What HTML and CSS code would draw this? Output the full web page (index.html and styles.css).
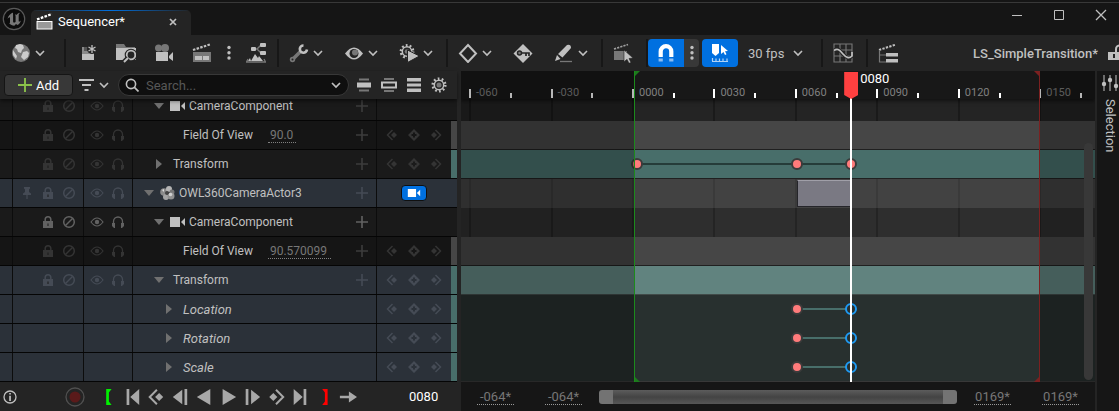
FILE: index.html
```html
<!DOCTYPE html>
<html lang="en">
<head>
    <meta charset="UTF-8">
    <meta name="viewport" content="width=device-width, initial-scale=1.0">
    <title>Sequencer</title>
    <link rel="stylesheet" href="styles.css">
</head>
<body>
    <svg class="sprite" aria-hidden="true">
        <symbol id="i-chev" viewBox="0 0 10 20"><path d="M1 8l4 4 4-4" fill="none" stroke="currentColor" stroke-width="1.6"/></symbol>
        <symbol id="i-dots" viewBox="0 0 6 20"><circle cx="3" cy="4.500" r="1.700"/><circle cx="3" cy="9.700" r="1.700"/><circle cx="3" cy="15" r="1.700"/></symbol>
        <symbol id="i-lock" viewBox="0 0 14 14"><path d="M2 6h10v7H2z"/><path d="M4.200 6.500V4.500a2.800 2.800 0 0 1 5.600 0v2" fill="none" stroke="currentColor" stroke-width="1.500"/><path d="M6.500 8.500h1v2.500h-1z" fill="#1a1a1a"/></symbol>
        <symbol id="i-ban" viewBox="0 0 14 14"><g fill="none" stroke="currentColor" stroke-width="1.500"><circle cx="7" cy="7" r="5.300"/><path d="M3.500 10.500l7-7"/></g></symbol>
        <symbol id="i-eye" viewBox="0 0 14 14"><path d="M1 7q6-8 12 0q-6 8-12 0z" fill="none" stroke="currentColor" stroke-width="1.200"/><circle cx="7" cy="7" r="2.200"/></symbol>
        <symbol id="i-phones" viewBox="0 0 14 14"><path d="M2.500 9V6.500a4.500 4.500 0 0 1 9 0V9" fill="none" stroke="currentColor" stroke-width="1.300"/><path d="M1 8h3v5H3L1 11zM13 8h-3v5h1l2-2z"/></symbol>
        <symbol id="i-pin" viewBox="0 0 14 14"><path d="M4 1h6v1.500L9 3.500V6l2 1.500V9H7.600v4H6.400V9H3V7.500L5 6V3.500L4 2.500z"/></symbol>
        <symbol id="i-plus" viewBox="0 0 12 12"><path d="M5.200 0h1.600v5.200H12v1.600H6.800V12H5.200V6.800H0V5.200h5.200z"/></symbol>
        <symbol id="i-cam" viewBox="0 0 17 12"><path d="M1 1h10v10H1zM12 6l4-4v8z"/></symbol>
        <symbol id="i-actor" viewBox="0 0 17 16"><circle cx="5" cy="7" r="3.800" fill="#8b8b8b"/><circle cx="10" cy="4" r="3" fill="#b5b5b5"/><circle cx="13" cy="7" r="2.500" fill="#777"/><circle cx="7" cy="12" r="3" fill="#a5a5a5"/><circle cx="12" cy="11" r="3.500" fill="#919191"/><circle cx="8" cy="8" r="2" fill="#444"/><circle cx="11.500" cy="9.500" r="1.800" fill="#d0d0d0"/><path d="M3 5l2-1v3z" fill="#ddd"/></symbol>
        <symbol id="i-open" viewBox="0 0 10 10"><path d="M0 2h10L5 8z"/></symbol>
        <symbol id="i-shut" viewBox="0 0 10 10"><path d="M2 0v10l6-5z"/></symbol>
        <symbol id="i-prev" viewBox="0 0 12 12"><path d="M6.500 1L1.500 6l5 5" fill="none" stroke="currentColor" stroke-width="1.500"/><path d="M8 3l3 3-3 3-3-3z"/></symbol>
        <symbol id="i-next" viewBox="0 0 12 12"><path d="M5.500 1l5 5-5 5" fill="none" stroke="currentColor" stroke-width="1.500"/><path d="M4 3l3 3-3 3-3-3z"/></symbol>
        <symbol id="i-key" viewBox="0 0 12 12"><path fill-rule="evenodd" d="M6 0l6 6-6 6-6-6zM5 3.500V5H3.500v2H5v1.500h2V7h1.500V5H7V3.500z"/></symbol>
    </svg>

    <header class="titlebar">
        <svg class="logo" viewBox="0 0 24 24"><circle cx="12" cy="12" r="10.700" fill="#0c0c0c" stroke="#5a5a5a" stroke-width="1.200"/><path d="M11 5.500C8.500 6.500 6 9 5.500 12c.8-1.200 1.700-2 2.200-1.700.5.200.3.900.3 1.700v3.200c0 .7-.3 1-.9.900 1.400 1.800 3.300 2.600 5.200 2.600l1.700-1.700 1.600 1.100c1.600-1 2.800-2.500 3.200-4.500-.8.900-1.500 1.200-1.900 1-.3-.2-.2-.6-.2-1.200V8.500c0-1.200.6-2 1.500-2.700-1.700.3-3 1-3.800 2.200-.5-.5-1-.6-1.700-.6.700.5.900.9.900 1.800v5.500c-.5.600-1 .9-1.500.9-.7 0-1-.5-1-1.300V8.500c0-1.300-.1-2.200-.1-3z" fill="#777"/></svg>
        <div class="tab">
            <svg class="tab-icon" viewBox="0 0 16 16"><path d="M1 8h14v7H1z" fill="#999" stroke="#fff"/><path d="M1 6l14-5" stroke="#fff" stroke-width="2.200" stroke-dasharray="2.500 1.200"/></svg>
            <span class="tab-name">Sequencer*</span>
            <button class="tab-close" aria-label="Close tab"><svg width="8" height="8" viewBox="0 0 8 8"><path d="M1 1l6 6M7 1L1 7" stroke="#c0c0c0" stroke-width="1.700"/></svg></button>
        </div>
        <div class="window-buttons">
            <button aria-label="Minimize"><svg viewBox="0 0 12 12"><path d="M1 6.500h10" stroke="#c0c0c0"/></svg></button>
            <button aria-label="Maximize"><svg viewBox="0 0 12 12"><path d="M1.500 1.500h9v9h-9z" fill="none" stroke="#c0c0c0"/></svg></button>
            <button aria-label="Close"><svg viewBox="0 0 12 12"><path d="M1 1l10 10M11 1L1 11" stroke="#c0c0c0" stroke-width="1.300"/></svg></button>
        </div>
    </header>

    <nav class="toolbar">
        <div class="group group-world">
            <button class="combo" aria-label="World"><svg class="ico" viewBox="0 0 20 20"><circle cx="10" cy="10" r="9" fill="#777"/><path d="M5 2l4-1 3 1 1 3-2 2-1 3-3-1-1-3-2-1zM12 9l4-1 2 2-1 4-4 3-3-3zM2 7l2 3 2 3-1 3-3-4z" fill="#ccc"/></svg><svg class="chev"><use href="#i-chev"/></svg></button>
        </div>
        <div class="group tight">
            <button aria-label="Save"><svg class="ico" viewBox="0 0 20 20"><path d="M4 4h12v13H4z" fill="#8a8a8a"/><path d="M6 4h5v4H6z" fill="#555"/><path d="M4 11h12v6H4z" fill="#c0c0c0"/><circle cx="14" cy="6" r="5" fill="#242424"/><path d="M14 2v8M10.500 4l7 4M10.500 8l7-4" stroke="#c0c0c0" stroke-width="1.300"/></svg></button>
            <button aria-label="Browse"><svg class="ico" viewBox="0 0 20 20"><path d="M0 1h8l2 3h9v3H0z" fill="#777"/><path d="M0 5h20v12H0z" fill="#c0c0c0"/><circle cx="15" cy="12" r="6.300" fill="#242424"/><circle cx="15" cy="12" r="4.300" fill="none" stroke="#c0c0c0" stroke-width="1.800"/><path d="M12 15l-4.500 4.500" stroke="#242424" stroke-width="5"/><path d="M12 15l-4 4" stroke="#c0c0c0" stroke-width="1.900"/></svg></button>
            <button aria-label="Create camera"><svg class="ico" viewBox="0 0 20 20"><circle cx="4.500" cy="5" r="3.500" fill="#777"/><circle cx="11" cy="5" r="4" fill="#777"/><path d="M2 9h12v9H2zM15 13l4-4v9l-4-3z" fill="#c0c0c0"/></svg></button>
            <button aria-label="Render movie"><svg class="ico" viewBox="0 0 20 20"><path d="M1 7L18 1.500" stroke="#c0c0c0" stroke-width="2.200" stroke-dasharray="2.500 1.300"/><path d="M1 9h18v10H1z" fill="#777"/><path d="M3 13h7v4H3zM11 13h6v4h-6z" fill="#c0c0c0"/></svg></button>
            <button class="dots" aria-label="Render options"><svg><use href="#i-dots"/></svg></button>
            <button aria-label="Actor sequence"><svg class="ico" viewBox="0 0 20 20"><path d="M2 18l2-3 1 3zM5 18l4-7 3 4 1-2 4 5z" fill="#c0c0c0"/><path d="M2 16l-1.500 3h19L18 16" fill="none" stroke="#777" stroke-width="1.300"/><path d="M8 6h3l4-4M11 6l4 4" stroke="#777" stroke-width="1.400" fill="none"/><rect x="5" y="4" width="5" height="4" rx="1" fill="#c0c0c0"/><rect x="14" width="6" height="4" rx="1" fill="#c0c0c0"/><rect x="14" y="8" width="6" height="4" rx="1" fill="#c0c0c0"/></svg></button>
        </div>
        <div class="group">
            <button class="combo" aria-label="Actions"><svg class="ico" viewBox="0 0 20 20"><path d="M3.500 16.500L12 8" stroke="#777" stroke-width="3.500"/><circle cx="3.500" cy="16.500" r="2.700" fill="#777"/><circle cx="3.500" cy="16.500" r="1" fill="#242424"/><path d="M14.500 2.500a3.600 3.600 0 1 0 3.500 4" fill="none" stroke="#c0c0c0" stroke-width="2.600"/></svg><svg class="chev"><use href="#i-chev"/></svg></button>
            <button class="combo" aria-label="View"><svg class="ico" viewBox="0 0 20 20"><path d="M1 10.500q9-12 18 0q-9 12-18 0z" fill="#c0c0c0"/><circle cx="10" cy="10.500" r="4.500" fill="#242424"/><circle cx="11" cy="9.500" r="3" fill="#777"/></svg><svg class="chev"><use href="#i-chev"/></svg></button>
            <button class="combo" aria-label="Playback"><svg class="ico" viewBox="0 0 20 20"><circle cx="8" cy="8.500" r="6.200" fill="none" stroke="#c0c0c0" stroke-width="2.400" stroke-dasharray="1.800 2.090"/><circle cx="8" cy="8.500" r="4.700" fill="none" stroke="#c0c0c0" stroke-width="1.500"/><circle cx="8" cy="8.500" r="2.300" fill="#777"/><path d="M8.500 7l12 6-12 6.500z" fill="#c0c0c0" stroke="#242424"/></svg><svg class="chev"><use href="#i-chev"/></svg></button>
        </div>
        <div class="group">
            <button class="combo" aria-label="Keying"><svg class="ico" viewBox="0 0 20 20"><path d="M10 2l8 8.500-8 8.500-8-8.500z" fill="none" stroke="#c0c0c0" stroke-width="2"/></svg><svg class="chev"><use href="#i-chev"/></svg></button>
            <button aria-label="Auto key"><svg class="ico" viewBox="0 0 20 20"><path d="M10 1l9.500 9.500L10 20 .5 10.500z" fill="#c0c0c0"/><circle cx="6.500" cy="10" r="2" fill="#777" stroke="#242424" stroke-width="1.500"/><path d="M9 10h7v3M13 10v3" fill="none" stroke="#242424" stroke-width="1.700"/></svg></button>
            <button class="combo" aria-label="Edit options"><svg class="ico" viewBox="0 0 20 20"><path d="M1 18l2-6 3.500 4zM4 11l9-9q4-1 4 3l-8.500 9.500z" fill="#c0c0c0"/><path d="M6 18.500h12" stroke="#777" stroke-width="1.300"/></svg><svg class="chev"><use href="#i-chev"/></svg></button>
        </div>
        <div class="group">
            <button aria-label="Select section"><svg class="ico" viewBox="0 0 20 20"><path d="M1 6l14-4.500" stroke="#a0a0a0" stroke-width="1.700" stroke-dasharray="2.200 1.100"/><path d="M1 8h13v9H1z" fill="#777"/><path d="M11 7l9 8-4 .5 2 4-2 .8-2-4-3 2.500z" fill="#c0c0c0" stroke="#242424" stroke-width=".6"/></svg></button>
        </div>
        <div class="group group-snap">
            <button class="toggle toggle-left" aria-label="Snapping" aria-pressed="true"><svg class="ico" viewBox="0 0 20 20"><path d="M4.700 14V8.500a5.300 5.300 0 0 1 10.600 0V14" fill="none" stroke="#fff" stroke-width="4.200"/><path d="M2.600 15.500h4.200v3H2.600zM13.200 15.500h4.200v3h-4.200z" fill="#8cbcf0"/></svg></button>
            <button class="toggle-more" aria-label="Snap options"><svg><use href="#i-dots"/></svg></button>
            <button class="toggle" aria-label="Play marker snap" aria-pressed="true"><svg class="ico" viewBox="0 0 20 20"><path d="M2 1h7v9l-3.500 3L2 10z" fill="#fff"/><path d="M11 2l7 6-3 .3 1.500 3-1.500.7-1.500-3L11 11z" fill="#fff"/><path d="M2 18.500h16M2.500 18v-3M6 18v-2.500M9.500 18v-2.500M13 18v-2.500M17 18v-2.500" stroke="#b0d2f6" stroke-width="1.200"/></svg></button>
            <label class="fps"><select aria-label="Frame rate"><option>30 fps</option></select><svg class="chev"><use href="#i-chev"/></svg></label>
        </div>
        <div class="group">
            <button aria-label="Curve editor"><svg class="ico" viewBox="0 0 20 20"><path d="M1 1h18v18H1zM7 1v18M13 1v18M1 7h18M1 13h18" fill="none" stroke="#777" stroke-width="1.100"/><path d="M1 7.500c4-3 6 0 9 3.500s6 5 9 2" fill="none" stroke="#242424" stroke-width="3.500"/><path d="M1 7.500c4-3 6 0 9 3.500s6 5 9 2V9" fill="none" stroke="#c0c0c0" stroke-width="1.700"/></svg></button>
        </div>
        <div class="group group-last">
            <button aria-label="Sequence list"><svg class="ico" viewBox="0 0 20 20"><path d="M1 7L18 1.500" stroke="#c0c0c0" stroke-width="2" stroke-dasharray="2.300 1.300"/><path d="M1.500 7v12H8M1.500 12H8" fill="none" stroke="#777" stroke-width="1.200"/><path d="M8 10h12v3.500H8zM8 16h12v3.500H8z" fill="#c0c0c0"/></svg></button>
        </div>
        <a class="crumb" href="#">LS_SimpleTransition*</a>
        <button class="crumb-lock" aria-label="Lock sequence"><svg class="ico" viewBox="0 0 20 20"><path d="M1 9h15v8H1z" fill="#c0c0c0"/><path d="M9 9V6a3.500 3.500 0 0 1 7 0" fill="none" stroke="#c0c0c0" stroke-width="2"/><path d="M6 11h2v4H6z" fill="#242424"/></svg></button>
    </nav>

    <main class="panes">
        <section class="outliner">
            <div class="filters">
                <button class="add"><svg width="14" height="14" viewBox="0 0 12 12"><use href="#i-plus"/></svg>Add</button>
                <button class="filter-menu" aria-label="Filter"><svg width="15" height="14" viewBox="0 0 15 14"><path d="M0 2h15M3 7h9M5.500 12h4" stroke="#c0c0c0" stroke-width="1.800"/></svg><svg class="chev"><use href="#i-chev"/></svg></button>
                <label class="search">
                    <svg width="14" height="14" viewBox="0 0 14 14"><circle cx="6" cy="6" r="4.600" fill="none" stroke="#c0c0c0" stroke-width="1.600"/><path d="M9.200 9.200l4.300 4.300" stroke="#c0c0c0" stroke-width="1.700"/></svg>
                    <input type="text" placeholder="Search..." aria-label="Search tracks">
                    <svg width="12" height="20" viewBox="0 0 10 20"><path d="M1 8l4 4 4-4" fill="none" stroke="#c0c0c0" stroke-width="1.700"/></svg>
                </label>
                <div class="views">
                    <button aria-label="Collapse"><svg viewBox="0 0 16 16"><path d="M3 1.500h10v2H3zM3 12.500h10v2H3z" fill="#777"/><path d="M1 5.500h14v5H1z" fill="#c0c0c0"/></svg></button>
                    <button aria-label="Compact"><svg viewBox="0 0 16 16"><path d="M3 1h10v2H3zM3 13h10v2H3z" fill="#777"/><path d="M1 5.500h14v5H1z" fill="none" stroke="#c0c0c0" stroke-width="2"/></svg></button>
                    <button aria-label="Expand"><svg viewBox="0 0 16 16"><path d="M1 1h14v3.500H1zM1 6.500h14v3H1zM1 11.500h14V15H1z" fill="#c0c0c0"/></svg></button>
                    <button aria-label="Settings"><svg viewBox="0 0 16 16"><circle cx="8" cy="8" r="6.300" fill="none" stroke="#c0c0c0" stroke-width="2.500" stroke-dasharray="1.700 2.250"/><circle cx="8" cy="8" r="4.700" fill="none" stroke="#c0c0c0" stroke-width="1.500"/><circle cx="8" cy="8" r="2.500" fill="#777"/></svg></button>
                </div>
            </div>
            <div class="viewport">
                <div class="tracks" id="tracks"></div>
            </div>
            <div class="transport">
                <button class="info" aria-label="Info"><svg width="14" height="14" viewBox="0 0 14 14"><circle cx="7" cy="7" r="6" fill="none" stroke="#c0c0c0" stroke-width="1.300"/><path d="M6.200 3h1.700v1.600H6.200zM6.200 5.700h1.700V11H6.200z" fill="#c0c0c0"/></svg></button>
                <button class="record" aria-label="Record"><svg width="20" height="20" viewBox="0 0 20 20"><circle cx="10" cy="10" r="9" fill="none" stroke="#505050" stroke-width="1.300"/><circle cx="10" cy="10" r="5.500" fill="#5a1a1a"/></svg></button>
                <button aria-label="Set start"><svg viewBox="0 0 20 20"><path d="M8 1h6l-3 4v10l3 4H8z" fill="#00f000"/></svg></button>
                <button aria-label="To start"><svg viewBox="0 0 20 20"><path d="M4 1h3v18H4zM18 1v18L8 10z"/></svg></button>
                <button aria-label="Previous key"><svg viewBox="0 0 20 20"><path d="M11 2l-8 8 8 8" fill="none" stroke="currentColor" stroke-width="2.200"/><path d="M13.500 5.500L18 10l-4.500 4.500L9 10z"/></svg></button>
                <button aria-label="Step back"><svg viewBox="0 0 20 20"><path d="M15 1h3v18h-3zM12.500 2v16L2 10z"/></svg></button>
                <button aria-label="Play reverse"><svg viewBox="0 0 20 20"><path d="M17 1v18L2 10z"/></svg></button>
                <button aria-label="Play"><svg viewBox="0 0 20 20"><path d="M4 1v18l15-9z"/></svg></button>
                <button aria-label="Step forward"><svg viewBox="0 0 20 20"><path d="M3 1h3v18H3zM9 2v16l10-8z"/></svg></button>
                <button aria-label="Next key"><svg viewBox="0 0 20 20"><path d="M10 2l8 8-8 8" fill="none" stroke="currentColor" stroke-width="2.200"/><path d="M7 5.500l4.500 4.500L7 14.500 2.500 10z"/></svg></button>
                <button aria-label="To end"><svg viewBox="0 0 20 20"><path d="M14 1h3v18h-3zM3 1v18l10-9z"/></svg></button>
                <button aria-label="Set end"><svg viewBox="0 0 20 20"><path d="M14 1H8l3 4v10l-3 4h6z" fill="#f00"/></svg></button>
                <button aria-label="Loop mode"><svg viewBox="0 0 20 20"><path d="M1 8.500h10V4l9 6-9 6v-4.500H1z"/></svg></button>
                <input class="now" type="text" value="0080" aria-label="Current frame">
            </div>
        </section>

        <section class="timeline">
            <div class="ruler" id="ruler"></div>
            <div class="viewport">
                <div class="lanes" id="lanes"></div>
            </div>
            <div class="shade shade-left"></div>
            <div class="shade shade-right"></div>
            <div class="bound bound-start"></div>
            <div class="bound bound-end"></div>
            <div class="playhead"><span class="playhead-frame">0080</span></div>
            <div class="vscroll"></div>
            <div class="range">
                <input type="text" value="-064*" aria-label="Working range start">
                <input type="text" value="-064*" aria-label="View range start">
                <div class="hscroll"></div>
                <input type="text" value="0169*" aria-label="View range end">
                <input type="text" value="0169*" aria-label="Working range end">
            </div>
        </section>

        <aside class="drawer">
            <button><svg width="18" height="18" viewBox="0 0 18 18"><path d="M3 1v16M9 1v16M15 1v16" stroke="#777" stroke-width="1.800"/><circle cx="3" cy="10" r="2.200"/><circle cx="9" cy="6" r="2.200"/><circle cx="15" cy="12" r="2.200"/></svg><span>Selection</span></button>
        </aside>
    </main>

    <script>
        const rows = [
            { name: "CameraComponent", indent: 21, arrow: "open", icon: "cam", tools: true, add: true },
            { name: "Field Of View", indent: 50, value: "90.0", tools: true, add: true, nav: true, look: "deep", bar: "gray", lane: "gray" },
            { name: "Transform", indent: 21, arrow: "shut", tools: true, add: true, nav: true, bar: "teal", lane: "teal", keys: [1, 60, 80] },
            { name: "OWL360CameraActor3", indent: 11, arrow: "open", icon: "actor", tools: true, pin: true, add: true, cut: true, look: "selected", lane: "actor", section: [60, 80] },
            { name: "CameraComponent", indent: 21, arrow: "open", icon: "cam", tools: true, add: true, look: "hover", lane: "hover" },
            { name: "Field Of View", indent: 50, value: "90.570099", tools: true, add: true, nav: true, look: "deep", bar: "gray", lane: "gray" },
            { name: "Transform", indent: 21, arrow: "open", tools: true, add: true, nav: true, look: "selected", bar: "teal", lane: "bright" },
            { name: "Location", indent: 31, arrow: "shut", nav: true, look: "selected channel", bar: "teal", lane: "channel", keys: [60], picked: 80 },
            { name: "Rotation", indent: 31, arrow: "shut", nav: true, look: "selected channel", bar: "teal", lane: "channel", keys: [60], picked: 80 },
            { name: "Scale", indent: 31, arrow: "shut", nav: true, look: "selected channel", bar: "teal", lane: "channel last", keys: [60], picked: 80 }
        ];

        const button = (id, label, cls = "") =>
            `<button class="${cls}" aria-label="${label}"><svg><use href="#i-${id}"/></svg></button>`;

        function trackRow(r) {
            const arrow = r.arrow ? button(r.arrow, "Toggle " + r.name, "arrow") : "";
            const icon = r.icon ? `<svg class="type"><use href="#i-${r.icon}"/></svg>` : "";
            const value = r.value ? `<input class="value ${r.value.length > 5 ? "wide" : ""}" type="text" value="${r.value}" aria-label="${r.name}">` : "";
            return `<div class="row ${r.look || ""}">
                <div class="cell"></div>
                <div class="cell tools">${r.pin ? button("pin", "Pin") : ""}${r.tools ? button("lock", "Lock") + button("ban", "Mute") : ""}</div>
                <div class="cell tools">${r.tools ? button("eye", "Visible") + button("phones", "Solo") : ""}</div>
                <div class="cell name" style="padding-left:${r.indent}px">${arrow}${icon}<span class="${icon ? "" : "plain"}">${r.name}</span>${value}${r.add ? button("plus", "Add track", "plus") : ""}</div>
                <div class="nav">${r.nav ? button("prev", "Previous key") + button("key", "Add key") + button("next", "Next key") : ""}${r.cut ? button("cam", "Camera lock", "cut") : ""}</div>
                <div class="bar ${r.bar || ""}"></div>
            </div>`;
        }

        function laneRow(r) {
            const keys = (r.keys || []).slice();
            const all = r.picked ? keys.concat(r.picked) : keys;
            let html = "";
            if (all.length) {
                html += `<i class="link" style="--f:${all[0]};--len:${all[all.length - 1] - all[0]}"></i>`;
            }
            if (r.section) {
                html += `<i class="clip" style="--f:${r.section[0]};--len:${r.section[1] - r.section[0]}"></i>`;
            }
            html += keys.map(k => `<i class="key" style="--f:${k}"></i>`).join("");
            if (r.picked) html += `<i class="key picked" style="--f:${r.picked}"></i>`;
            return `<div class="lane ${r.lane || ""}">${html}</div>`;
        }

        let ticks = "";
        let grid = "";
        for (let f = -60; f <= 165; f += 15) {
            const major = f % 30 === 0;
            const label = (f < 0 ? "-" : "") + String(Math.abs(f)).padStart(f < 0 ? 3 : 4, "0");
            ticks += `<i class="tick ${major ? "major" : ""}" style="--f:${f}"></i>`;
            if (major) {
                ticks += `<span class="tick-label" style="--f:${f}">${label}</span>`;
                grid += `<i class="gridline" style="--f:${f}"></i>`;
            }
        }

        document.getElementById("tracks").innerHTML = rows.map(trackRow).join("");
        document.getElementById("lanes").innerHTML = grid + rows.map(laneRow).join("");
        document.getElementById("ruler").innerHTML = ticks;
    </script>
</body>
</html>
```
FILE: styles.css
```css
* {
    box-sizing: border-box;
}

body {
    margin: 0;
    height: 100vh;
    display: flex;
    flex-direction: column;
    overflow: hidden;
    background: #151515;
    color: #c0c0c0;
    font-family: Roboto, "Liberation Sans", sans-serif;
    font-size: 13px;
}

button,
input,
select {
    margin: 0;
    padding: 0;
    border: 0;
    background: none;
    color: inherit;
    font: inherit;
}

button {
    display: flex;
    align-items: center;
    justify-content: center;
    flex: none;
}

svg {
    display: block;
    flex: none;
    fill: currentColor;
}

.sprite {
    position: absolute;
    width: 0;
    height: 0;
}

/* title bar */
.titlebar {
    display: flex;
    flex: none;
    height: 35px;
    padding-left: 2px;
    border-top: 1px solid #151515;
    background: linear-gradient(#151515 1px, #383838 1px, #383838 2px, #151515 2px);
}

.logo {
    width: 24px;
    height: 24px;
    margin-top: 6px;
}

.tab {
    display: flex;
    align-items: center;
    width: 160px;
    margin: 9px 0 0 5px;
    padding: 0 14px 2px 5px;
    border-radius: 5px 5px 0 0;
    background: linear-gradient(90deg, #242424, #0070e0, #242424) top / 100% 1px no-repeat #242424;
    color: #fff;
}

.tab-icon {
    width: 17px;
    height: 17px;
}

.tab-name {
    margin: 0 auto 0 5px;
}

.window-buttons {
    display: flex;
    align-items: flex-start;
    gap: 30px;
    margin: 8px 12px 0 auto;
}

.window-buttons svg {
    width: 12px;
    height: 12px;
}

/* toolbar */
.toolbar {
    display: flex;
    flex: none;
    align-items: center;
    height: 36px;
    background: #242424;
}

.group {
    display: flex;
    align-items: center;
    gap: 21px;
    height: 28px;
    padding: 0 13px 0 10px;
    border-right: 2px solid #171717;
}

.group-world {
    padding: 0 19px 0 11px;
}

.tight {
    gap: 18px;
    padding: 0 11px 0 12px;
}

.combo {
    gap: 4px;
}

.ico {
    width: 20px;
    height: 20px;
}

.chev {
    width: 10px;
    height: 20px;
}

.dots {
    margin: 0 -4px;
}

.dots svg,
.toggle-more svg {
    width: 6px;
    height: 20px;
}

.group-snap {
    gap: 0;
    padding: 0 18px 0 0;
}

.group-last {
    border-right: 0;
}

.toggle {
    width: 36px;
    height: 28px;
    border-radius: 4px;
    background: #0070e0;
}

.toggle-left {
    border-radius: 4px 0 0 4px;
}

.toggle-more {
    width: 15px;
    height: 28px;
    margin-right: 3px;
    border-radius: 0 4px 4px 0;
    background: #383838;
}

.fps {
    display: flex;
    align-items: center;
    gap: 8px;
    margin-left: 10px;
}

.fps select {
    appearance: none;
}

.crumb {
    margin-left: auto;
    color: #c0c0c0;
    font-weight: 500;
    text-decoration: none;
}

.crumb-lock {
    margin: 0 -8px 0 9px;
}

/* panes */
.panes {
    display: grid;
    flex: 1;
    grid-template-columns: minmax(461px, 41%) 1fr 24px;
    min-height: 0;
}

.outliner {
    display: flex;
    flex-direction: column;
    min-height: 0;
    padding-right: 4px;
    background: #242424;
}

.viewport {
    flex: 1;
    min-height: 0;
    overflow: hidden;
}

.filters {
    display: flex;
    flex: none;
    align-items: center;
    height: 28px;
    padding: 0 10px 0 4px;
    background: #242424;
    box-shadow: 0 2px 4px #0008;
    z-index: 1;
}

.add {
    gap: 4px;
    width: 69px;
    height: 22px;
    border: 1px solid #151515;
    border-radius: 4px;
    background: #383838;
    color: #fff;
}

.add svg {
    color: #8bc24a;
}

.filter-menu {
    gap: 5px;
    margin: 0 9px 0 6px;
}

.search {
    display: flex;
    flex: 1;
    align-items: center;
    gap: 7px;
    height: 22px;
    padding: 0 6px;
    border: 1px solid #383838;
    border-radius: 11px;
    background: #0f0f0f;
}

.search input {
    flex: 1;
    min-width: 0;
}

.search input::placeholder {
    color: #575757;
}

.views {
    display: flex;
    gap: 9px;
    margin-left: 7px;
}

.views svg {
    width: 16px;
    height: 16px;
}

/* track list, scrolled a little past the first row */
.tracks,
.lanes {
    position: relative;
    margin-top: -7px;
}

.row {
    display: grid;
    grid-template-columns: 13px 71px 49px 1fr 74px 6px;
    height: 29px;
    border-bottom: 1px solid #050505;
    background: #1a1a1a;
    font-size: 12px;
}

.deep {
    background: #151515;
}

.selected {
    background: #2b3139;
}

.cell {
    display: flex;
    align-items: center;
    border-right: 1px solid #0c0c0c;
}

.tools {
    justify-content: flex-end;
    gap: 7px;
    padding-right: 7px;
    color: #343434;
}

.tools svg {
    width: 14px;
    height: 14px;
}

.selected .tools,
.selected .nav,
.selected .plus {
    color: #454b55;
}

.hover .tools,
.hover .plus {
    color: #626262;
}

.arrow {
    color: #707070;
}

.arrow svg {
    width: 10px;
    height: 10px;
}

.type {
    width: 17px;
    height: 16px;
    margin: 0 3px 0 5px;
}

.arrow + .plain {
    margin-left: 9px;
}

.channel {
    font-size: 13px;
}

.channel span {
    font-style: italic;
}

.value {
    width: 28px;
    margin-left: 15px;
    padding-left: 2px;
    border-bottom: 1px dotted #808080;
    color: #777;
}

.wide {
    width: 63px;
}

.plus {
    margin: 0 8px 0 auto;
    color: #3c3c3c;
}

.plus svg {
    width: 12px;
    height: 12px;
}

.nav {
    display: flex;
    align-items: center;
    justify-content: center;
    gap: 10px;
    color: #343434;
}

.nav svg {
    width: 12px;
    height: 12px;
}

.cut {
    width: 26px;
    height: 16px;
    border: 1px solid #101010;
    border-radius: 4px;
    background: #0070e0;
    color: #fff;
}

.cut svg {
    width: 14px;
    height: 10px;
}

.gray {
    background: #464646;
}

.teal {
    background: #486e6a;
}

/* transport */
.transport {
    display: flex;
    flex: none;
    align-items: center;
    height: 29px;
    color: #a8a8a8;
}

.transport button {
    width: 24px;
}

.transport button svg {
    width: 18px;
    height: 18px;
}

.transport .info {
    width: 20px;
}

.transport .info svg {
    width: 14px;
    height: 14px;
}

.transport .record {
    margin: 0 9px 0 43px;
}

.transport .record svg {
    width: 20px;
    height: 20px;
}

.now {
    width: 32px;
    margin: 0 16px 0 auto;
    color: #fff;
}

/* timeline: --f is a frame, the view spans 233 frames from -64 */
.timeline {
    position: relative;
    display: flex;
    flex-direction: column;
    min-height: 0;
    overflow: hidden;
    background: #242424;
}

.ruler {
    position: relative;
    flex: none;
    height: 28px;
    background: #181818;
    box-shadow: 0 2px 4px #0008;
    z-index: 3;
}

.tick,
.tick-label,
.gridline,
.key,
.link,
.clip {
    position: absolute;
    left: calc((var(--f) + 63.7) / 233.5 * 100%);
}

.tick {
    bottom: 1px;
    width: 2px;
    height: 5px;
    margin-left: -2px;
    background: #fff;
}

.major {
    height: 9px;
}

.tick-label {
    bottom: 0;
    margin-left: 5px;
    color: #808080;
    font-size: 11px;
}

.gridline {
    top: 0;
    bottom: 0;
    width: 2px;
    margin-left: -2px;
    background: #0004;
}

.lane {
    position: relative;
    height: 29px;
}

.lane.gray,
.lane.teal,
.lane.bright {
    border-bottom: 1px solid #202020;
}

.lane.actor {
    background: #ffffff24;
}

.lane.hover {
    background: #ffffff0c;
}

.lane.bright {
    border-color: #414b49;
    background: #61837f;
}

.lane.channel {
    background: #28302f;
}

.lane.last {
    border-bottom: 1px solid #383838;
}

.link {
    top: 13px;
    width: calc(var(--len) / 233.5 * 100%);
    height: 2px;
    background: #253c39;
}

.channel .link {
    background: #486e6a;
}

.key {
    top: 8px;
    width: 12px;
    height: 12px;
    margin-left: -6px;
    border: 2px solid #3b3b3b;
    border-radius: 50%;
    background: #ff7b7b;
}

.picked {
    border-color: #1e9bf5;
    background: #28302f;
}

.clip {
    top: 1px;
    width: calc(var(--len) / 233.5 * 100%);
    height: 27px;
    border: 1px solid #25252a;
    border-top-color: #a09fa8;
    background: #7a7983;
}

.shade {
    position: absolute;
    top: 0;
    bottom: 29px;
    background: #00000048;
    z-index: 4;
}

.shade-left {
    left: 0;
    width: calc(63.7 / 233.5 * 100%);
}

.shade-right {
    right: 0;
    width: calc(20.2 / 233.5 * 100%);
}

.bound {
    position: absolute;
    top: 0;
    bottom: 29px;
    width: 5px;
    z-index: 5;
}

.bound::before,
.bound::after {
    content: "";
    position: absolute;
    border: 5px solid transparent;
    border-width: 5px 0;
}

.bound::before {
    top: 0;
    border-top-color: currentColor;
}

.bound::after {
    bottom: 0;
    border-bottom-color: currentColor;
}

.bound-start {
    left: calc(63.7 / 233.5 * 100%);
    border-left: 1px solid #1c8a1c;
    color: #1c7a1c;
}

.bound-start::before,
.bound-start::after {
    left: 0;
    border-right-width: 5px;
}

.bound-end {
    right: calc(20.2 / 233.5 * 100%);
    border-right: 1px solid #7c2020;
    color: #7c2020;
}

.bound-end::before,
.bound-end::after {
    right: 0;
    border-left-width: 5px;
}

.playhead {
    position: absolute;
    top: 27px;
    bottom: 29px;
    left: calc(143.7 / 233.5 * 100%);
    width: 2px;
    margin-left: -1px;
    background: #fff;
    z-index: 6;
}

.playhead::before {
    content: "";
    position: absolute;
    top: -26px;
    left: -6px;
    width: 14px;
    height: 27px;
    background: #ff4040;
    clip-path: polygon(0 0, 100% 0, 100% 85%, 50% 100%, 0 85%);
}

.playhead-frame {
    position: absolute;
    top: -27px;
    left: 10px;
    color: #fff;
}

.vscroll {
    position: absolute;
    top: 72px;
    right: 2px;
    bottom: 31px;
    width: 9px;
    border-radius: 5px;
    background: #383838;
    z-index: 6;
}

.range {
    display: flex;
    flex: none;
    align-items: center;
    gap: 31px;
    height: 29px;
    padding: 0 16px;
    background: #161616;
    color: #777;
}

.range input {
    width: 37px;
    border-bottom: 1px dotted #999;
    text-align: center;
}

.hscroll {
    flex: 1;
    height: 14px;
    margin: 0 -14px;
    border: solid #737373;
    border-width: 0 14px;
    border-radius: 3px;
    background: linear-gradient(#5c5c5c, #444 50%, #565656);
}

/* side drawer */
.drawer {
    border-left: 2px solid #242424;
    background: #161616;
}

.drawer button {
    flex-direction: column;
    gap: 7px;
    width: 18px;
    margin: 3px 0 0 4px;
}

.drawer span {
    writing-mode: vertical-rl;
}
```
